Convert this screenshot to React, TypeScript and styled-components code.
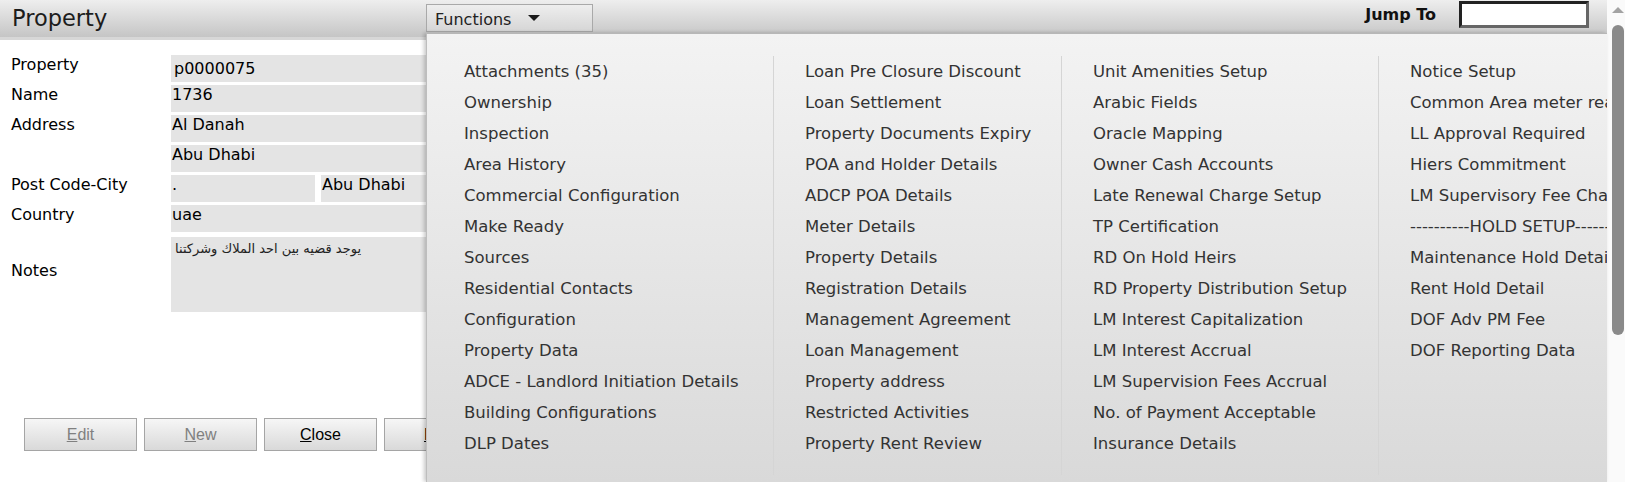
import styled, { createGlobalStyle } from "styled-components";

const GlobalStyle = createGlobalStyle`
  html, body {
    margin: 0;
    padding: 0;
    overflow: hidden;
    background: #fff;
  }
  body {
    font-family: "DejaVu Sans", Verdana, sans-serif;
  }
`;

const Page = styled.div`
  display: flex;
  width: 1625px;
  height: 482px;
  overflow: hidden;
`;

const Main = styled.div`
  position: relative;
  flex: 1;
  min-width: 0;
`;

const Header = styled.header`
  display: flex;
  align-items: flex-start;
  height: 37px;
  border-bottom: 3px solid #d7d7d7;
  background: linear-gradient(#eeeeee, #c5c5c5);
`;

const Title = styled.h1`
  width: 414px;
  margin: 0;
  padding-left: 12px;
  font-size: 22.5px;
  font-weight: normal;
  line-height: 37px;
  color: #1c1c1c;
`;

const FunctionsButton = styled.div`
  display: flex;
  align-items: center;
  box-sizing: border-box;
  width: 167px;
  height: 28px;
  margin-top: 4px;
  padding: 3px 0 0 8px;
  border: 1px solid #a9a9a9;
  background: linear-gradient(#eeeeee, #d6d6d6);
  font-size: 16px;
  line-height: 24px;
  color: #222;
`;

const Caret = styled.span`
  width: 0;
  height: 0;
  margin: -3px 0 0 17px;
  border-left: 6px solid transparent;
  border-right: 6px solid transparent;
  border-top: 6px solid #1a1a1a;
`;

const Spacer = styled.div`
  flex: 1;
`;

const JumpLabel = styled.span`
  margin: 5px 23px 0 0;
  font-size: 16px;
  font-weight: bold;
  color: #111;
`;

const JumpInput = styled.div`
  box-sizing: border-box;
  width: 130px;
  height: 27px;
  margin: 1px 18px 0 0;
  border: 3px solid;
  border-color: #222 #666 #666 #222;
  background: #fff;
`;

const Form = styled.div`
  display: grid;
  grid-template-columns: 160px 420px;
  row-gap: 3px;
  padding: 15px 0 0 11px;
`;

const Label = styled.div<{ $center?: boolean }>`
  align-self: ${(p) => (p.$center ? "center" : "start")};
  margin-bottom: ${(p) => (p.$center ? "6px" : "0")};
  font-size: 16px;
  line-height: 20px;
  color: #000;
`;

const Field = styled.div<{ $indent?: number; $top?: number; $width?: number }>`
  box-sizing: border-box;
  height: 27px;
  ${(p) => (p.$width ? `width: ${p.$width}px;` : "flex: 1;")}
  padding-left: ${(p) => p.$indent ?? 1}px;
  padding-top: ${(p) => p.$top ?? 0}px;
  background: #e4e4e4;
  font-size: 16px;
  line-height: 20px;
  color: #000;
  white-space: nowrap;
  overflow: hidden;
`;

const SplitRow = styled.div`
  display: flex;
  gap: 6px;
`;

const Notes = styled.div`
  box-sizing: border-box;
  height: 75px;
  margin-top: 2px;
  padding: 4px 4px;
  background: #e4e4e4;
  font-size: 13px;
  line-height: 16px;
  color: #222;
  text-align: left;
`;

const ButtonBar = styled.div`
  display: flex;
  gap: 7px;
  margin: 106px 0 0 24px;
`;

const Button = styled.div<{ $disabled?: boolean }>`
  display: flex;
  align-items: center;
  justify-content: center;
  box-sizing: border-box;
  width: 113px;
  height: 33px;
  border: 1px solid #a5a5a5;
  background: linear-gradient(#f6f6f6, #d9d9d9);
  font-family: "Liberation Sans", Arial, sans-serif;
  font-size: 16px;
  color: ${(p) => (p.$disabled ? "#808080" : "#000")};
`;

const Menu = styled.div`
  position: absolute;
  top: 33px;
  left: 426px;
  right: 0;
  bottom: 0;
  display: flex;
  align-items: flex-start;
  padding: 22px 0 0 6px;
  border-top: 1px solid #b7b7b7;
  border-left: 1px solid #bdbdbd;
  box-shadow: -2px 0 4px rgba(0, 0, 0, 0.22);
  background: linear-gradient(#f3f3f3, #d9d9d9);
  overflow: hidden;
`;

const Column = styled.ul<{ $width?: number; $last?: boolean }>`
  flex-shrink: 0;
  box-sizing: border-box;
  ${(p) => (p.$width ? `width: ${p.$width}px;` : "")}
  margin: 0;
  padding: 0 30px 16px 31px;
  list-style: none;
  border-right: ${(p) => (p.$last ? "none" : "1px solid #d5d5d5")};
`;

const Item = styled.li`
  font-size: 16.5px;
  line-height: 31px;
  color: #333;
  white-space: nowrap;
`;

const ScrollTrack = styled.div`
  display: flex;
  flex-direction: column;
  box-sizing: border-box;
  width: 18px;
  padding-left: 5px;
  background: #fafafa;
`;

const UpArrow = styled.div`
  width: 0;
  height: 0;
  margin-top: 7px;
  border-left: 6px solid transparent;
  border-right: 6px solid transparent;
  border-bottom: 6px solid #a3a3a3;
`;

const Thumb = styled.div`
  width: 12px;
  height: 310px;
  margin-top: 12px;
  border-radius: 6px;
  background: #8a8a8a;
`;

const columns: { width?: number; items: string[] }[] = [
  {
    width: 341,
    items: [
      "Attachments (35)",
      "Ownership",
      "Inspection",
      "Area History",
      "Commercial Configuration",
      "Make Ready",
      "Sources",
      "Residential Contacts",
      "Configuration",
      "Property Data",
      "ADCE - Landlord Initiation Details",
      "Building Configurations",
      "DLP Dates",
    ],
  },
  {
    width: 288,
    items: [
      "Loan Pre Closure Discount",
      "Loan Settlement",
      "Property Documents Expiry",
      "POA and Holder Details",
      "ADCP POA Details",
      "Meter Details",
      "Property Details",
      "Registration Details",
      "Management Agreement",
      "Loan Management",
      "Property address",
      "Restricted Activities",
      "Property Rent Review",
    ],
  },
  {
    width: 317,
    items: [
      "Unit Amenities Setup",
      "Arabic Fields",
      "Oracle Mapping",
      "Owner Cash Accounts",
      "Late Renewal Charge Setup",
      "TP Certification",
      "RD On Hold Heirs",
      "RD Property Distribution Setup",
      "LM Interest Capitalization",
      "LM Interest Accrual",
      "LM Supervision Fees Accrual",
      "No. of Payment Acceptable",
      "Insurance Details",
    ],
  },
  {
    items: [
      "Notice Setup",
      "Common Area meter reading",
      "LL Approval Required",
      "Hiers Commitment",
      "LM Supervisory Fee Charges",
      "----------HOLD SETUP----------",
      "Maintenance Hold Details",
      "Rent Hold Detail",
      "DOF Adv PM Fee",
      "DOF Reporting Data",
    ],
  },
];

export default function App() {
  return (
    <>
      <GlobalStyle />
      <Page>
        <Main>
          <Header>
            <Title>Property</Title>
            <FunctionsButton>
              Functions
              <Caret />
            </FunctionsButton>
            <Spacer />
            <JumpLabel>Jump To</JumpLabel>
            <JumpInput />
          </Header>

          <Form>
            <Label>Property</Label>
            <Field $indent={3} $top={4}>
              p0000075
            </Field>
            <Label>Name</Label>
            <Field>1736</Field>
            <Label>Address</Label>
            <Field>Al Danah</Field>
            <Label />
            <Field>Abu Dhabi</Field>
            <Label>Post Code-City</Label>
            <SplitRow>
              <Field $width={144}>.</Field>
              <Field>Abu Dhabi</Field>
            </SplitRow>
            <Label>Country</Label>
            <Field>uae</Field>
            <Label $center>Notes</Label>
            <Notes>يوجد قضيه بين احد الملاك وشركتنا</Notes>
          </Form>

          <ButtonBar>
            <Button $disabled>
              <u>E</u>dit
            </Button>
            <Button $disabled>
              <u>N</u>ew
            </Button>
            <Button>
              <u>C</u>lose
            </Button>
            <Button>
              <u>P</u>rint
            </Button>
          </ButtonBar>

          <Menu>
            {columns.map((col, i) => (
              <Column key={i} $width={col.width} $last={i === columns.length - 1}>
                {col.items.map((item) => (
                  <Item key={item}>{item}</Item>
                ))}
              </Column>
            ))}
          </Menu>
        </Main>
        <ScrollTrack>
          <UpArrow />
          <Thumb />
        </ScrollTrack>
      </Page>
    </>
  );
}
